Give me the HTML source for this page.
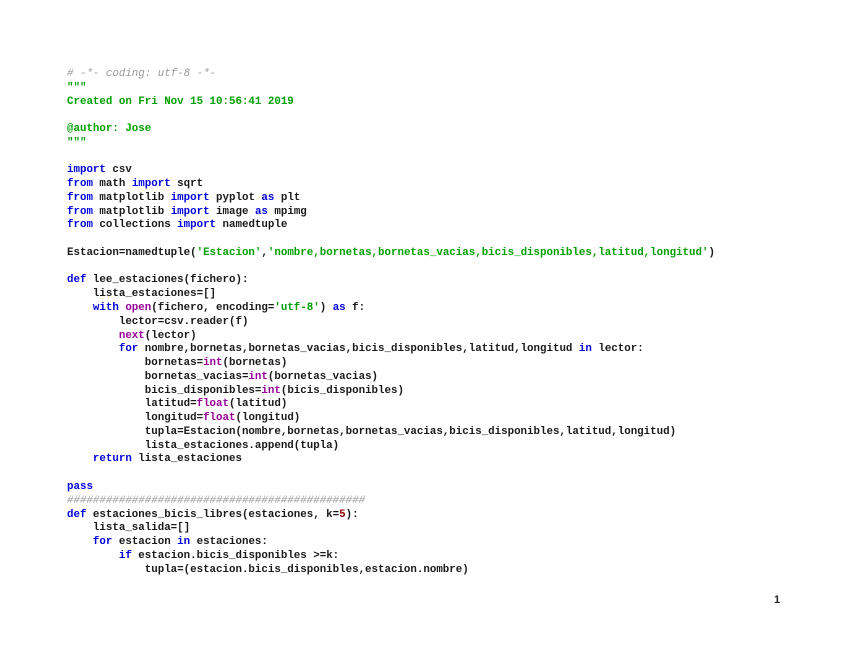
<!DOCTYPE html>
<html><head><meta charset="utf-8"><style>
html,body{margin:0;padding:0;background:#fff;width:848px;height:655px;overflow:hidden}
pre{position:absolute;left:67px;top:68px;margin:0;font-family:"Liberation Mono",monospace;font-size:10.8px;line-height:13.76px;font-weight:bold;color:#1a1a1a}
.k{color:#0000e0}.s{color:#00a000}.c{color:#999;font-style:italic;font-weight:normal}.b{color:#9a009a}.n{color:#900000}
.p{position:absolute;left:774px;top:594px;font-family:"Liberation Sans",sans-serif;font-size:11px;font-weight:bold;color:#222}
</style></head><body>
<pre><span class="c"># -*- coding: utf-8 -*-</span>
<span class="s">"""
Created on Fri Nov 15 10:56:41 2019

@author: Jose
"""</span>

<span class="k">import</span> csv
<span class="k">from</span> math <span class="k">import</span> sqrt
<span class="k">from</span> matplotlib <span class="k">import</span> pyplot <span class="k">as</span> plt
<span class="k">from</span> matplotlib <span class="k">import</span> image <span class="k">as</span> mpimg
<span class="k">from</span> collections <span class="k">import</span> namedtuple

Estacion=namedtuple(<span class="s">'Estacion'</span>,<span class="s">'nombre,bornetas,bornetas_vacias,bicis_disponibles,latitud,longitud'</span>)

<span class="k">def</span> lee_estaciones(fichero):
    lista_estaciones=[]
    <span class="k">with</span> <span class="b">open</span>(fichero, encoding=<span class="s">'utf-8'</span>) <span class="k">as</span> f:
        lector=csv.reader(f)
        <span class="b">next</span>(lector)
        <span class="k">for</span> nombre,bornetas,bornetas_vacias,bicis_disponibles,latitud,longitud <span class="k">in</span> lector:
            bornetas=<span class="b">int</span>(bornetas)
            bornetas_vacias=<span class="b">int</span>(bornetas_vacias)
            bicis_disponibles=<span class="b">int</span>(bicis_disponibles)
            latitud=<span class="b">float</span>(latitud)
            longitud=<span class="b">float</span>(longitud)
            tupla=Estacion(nombre,bornetas,bornetas_vacias,bicis_disponibles,latitud,longitud)
            lista_estaciones.append(tupla)
    <span class="k">return</span> lista_estaciones

<span class="k">pass</span>
<span class="c">##############################################</span>
<span class="k">def</span> estaciones_bicis_libres(estaciones, k=<span class="n">5</span>):
    lista_salida=[]
    <span class="k">for</span> estacion <span class="k">in</span> estaciones:
        <span class="k">if</span> estacion.bicis_disponibles &gt;=k:
            tupla=(estacion.bicis_disponibles,estacion.nombre)</pre>
<div class="p">1</div>
</body></html>
